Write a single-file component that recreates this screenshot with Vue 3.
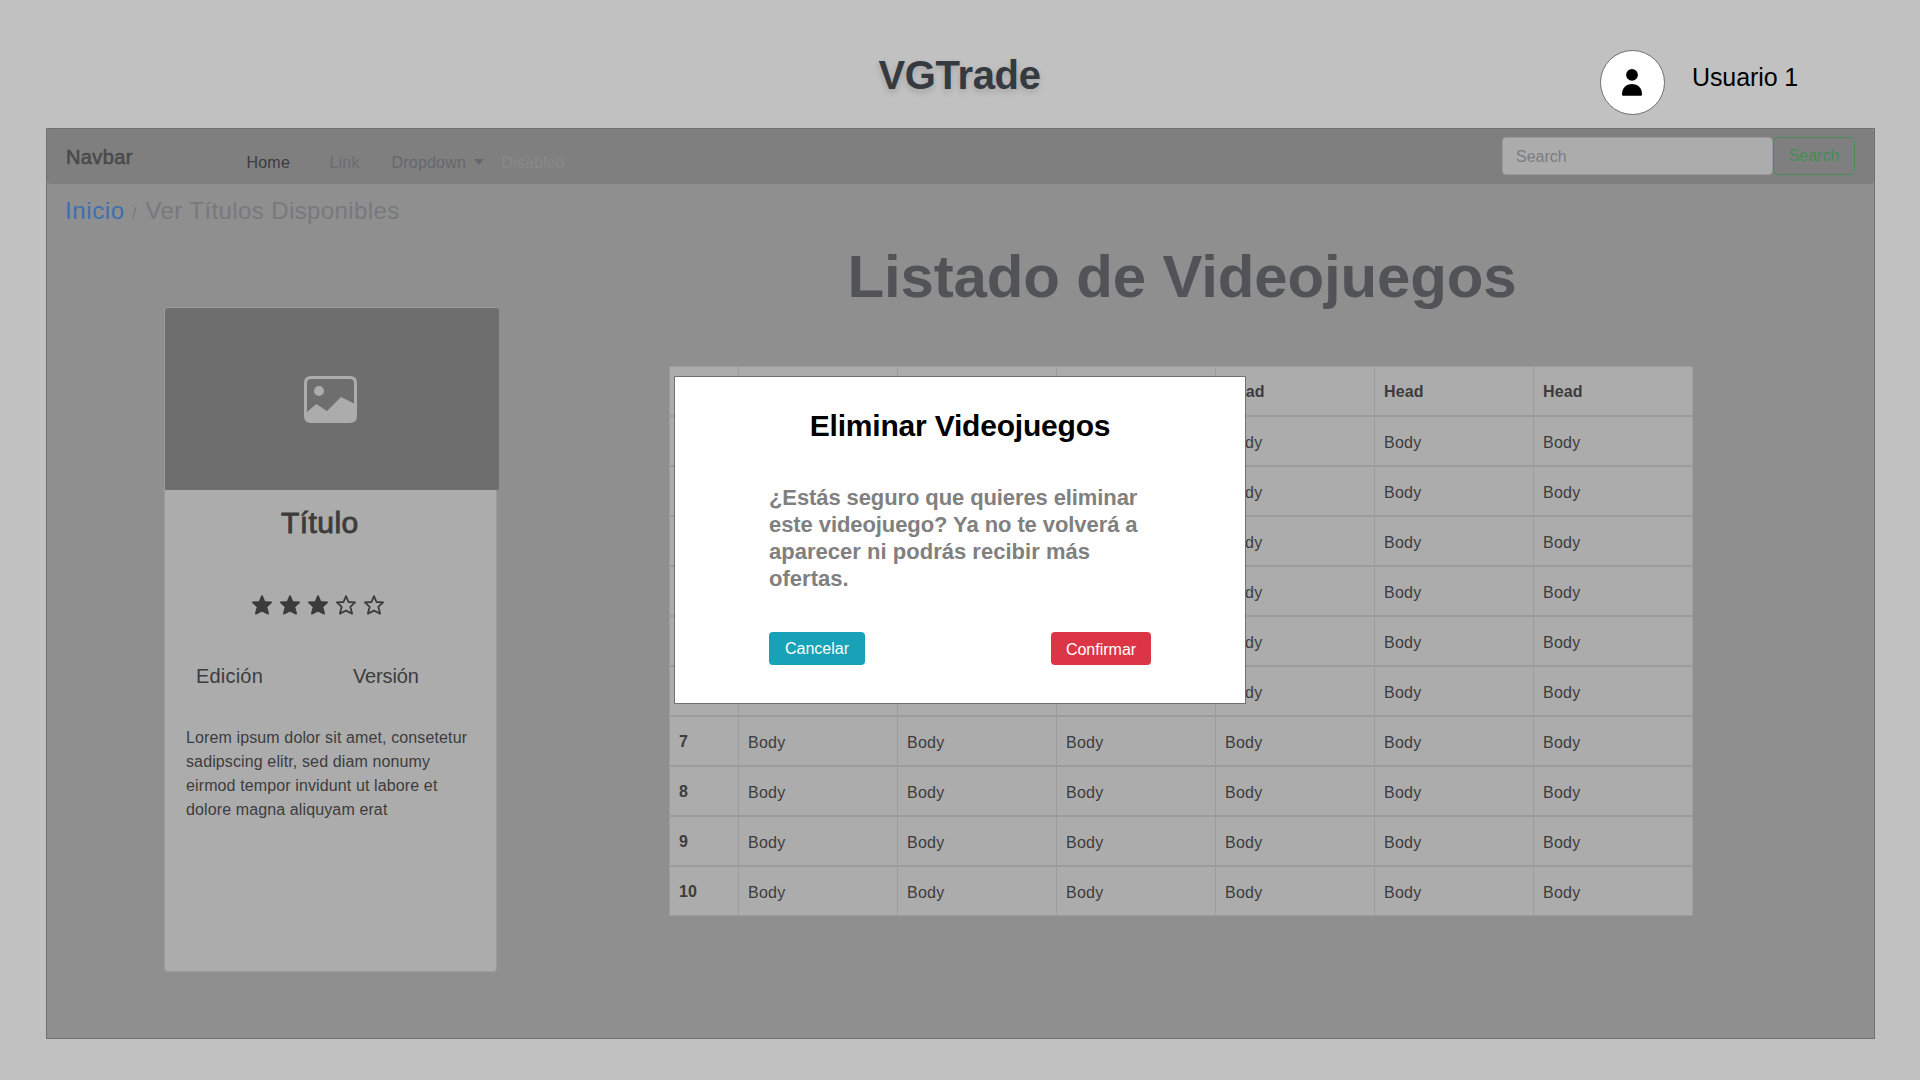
<script setup>
const columns = 6
const rows = Array.from({ length: 10 }, (_, i) => i + 1)
const stars = [true, true, true, false, false]
const starPath = 'M10 1.1 L12.5 7 L19.1 7.4 L14.3 11.8 L16.1 18.6 L10 15.6 L3.9 18.6 L5.7 11.8 L0.9 7.4 L7.5 7 Z'

// The dialog covers the first columns of the header and of rows 1 to 6.
const covered = (row, col) => row <= 6 && col <= 3
</script>

<template>
  <div class="page">
    <header class="top">
      <h1 class="brand">VGTrade</h1>
      <div class="avatar">
        <svg width="20" height="27" viewBox="0 0 20 27">
          <circle cx="10" cy="5.9" r="5.9" />
          <path d="M0 25.200C0 19 4.300 15 10 15S20 19 20 25.200Q20 26.800 18.700 26.800H1.300Q0 26.800 0 25.200Z" />
        </svg>
      </div>
      <span class="user">Usuario 1</span>
    </header>

    <div class="panel">
      <nav class="navbar">
        <span class="nav-brand">Navbar</span>
        <span class="home">Home</span>
        <span class="link">Link</span>
        <span class="dropdown">Dropdown</span>
        <i class="caret"></i>
        <span class="disabled">Disabled</span>
        <div class="search-input">Search</div>
        <div class="search-btn">Search</div>
      </nav>

      <div class="crumbs">
        <span class="start">Inicio</span><span class="slash">/</span><span class="current">Ver Títulos Disponibles</span>
      </div>

      <main class="main">
        <article class="card">
          <div class="cover">
            <svg width="53" height="47" viewBox="0 0 53 47">
              <path fill-rule="evenodd" d="M7 0H46Q53 0 53 7V40Q53 47 46 47H7Q0 47 0 40V7Q0 0 7 0ZM7 3Q3 3 3 7V36L12.300 28L23 35L37 21L50 27.500V7Q50 3 46 3Z" />
              <circle cx="15" cy="15" r="5" />
            </svg>
          </div>
          <h3 class="title">Título</h3>
          <div class="stars">
            <svg v-for="(full, i) in stars" :key="i" width="20" height="20" viewBox="0 0 20 20">
              <path :d="starPath" :class="full ? 'full' : 'empty'" />
            </svg>
          </div>
          <div class="meta"><span class="edition">Edición</span><span class="version">Versión</span></div>
          <p class="desc">
            Lorem ipsum dolor sit amet, consetetur<br />sadipscing elitr, sed diam nonumy<br />eirmod tempor invidunt ut labore et<br />dolore magna aliquyam erat
          </p>
        </article>

        <section class="listing">
          <h2 class="heading">Listado de Videojuegos</h2>
          <div class="table">
            <div class="row head">
              <div class="cell"></div>
              <div v-for="c in columns" :key="c" class="cell">{{ covered(0, c) ? '' : 'Head' }}</div>
            </div>
            <div v-for="r in rows" :key="r" class="row">
              <div class="cell num">{{ covered(r, 0) ? '' : r }}</div>
              <div v-for="c in columns" :key="c" class="cell">{{ covered(r, c) ? '' : 'Body' }}</div>
            </div>
          </div>
        </section>
      </main>
    </div>

    <div class="modal">
      <h2 class="modal-title">Eliminar Videojuegos</h2>
      <p class="modal-text">
        <span class="l1">¿Estás seguro que quieres eliminar</span>
        <span class="l2">este videojuego? Ya no te volverá a</span>
        <span class="l3">aparecer ni podrás recibir más</span>
        <span class="l3">ofertas.</span>
      </p>
      <div class="actions">
        <div class="btn cancel">Cancelar</div>
        <div class="btn confirm">Confirmar</div>
      </div>
    </div>
  </div>
</template>

<style>
body {
  margin: 0;
}
</style>

<style scoped>
* {
  box-sizing: border-box;
}
h1,
h2,
h3,
p {
  margin: 0;
}
.page {
  position: relative;
  width: 1920px;
  height: 1080px;
  overflow: hidden;
  background: #c1c1c1;
  font-family: 'Liberation Sans', Arial, sans-serif;
  font-size: 16px;
  color: #3c3c3c;
  white-space: nowrap;
}
.top {
  display: flex;
  align-items: flex-start;
  height: 128px;
}
.brand {
  margin: 55px 0 0 878.500px;
  width: 170px;
  font-size: 40px;
  line-height: 40px;
  letter-spacing: -0.35px;
  color: #343a40;
  text-shadow: 0 3px 6px rgba(0, 0, 0, 0.16);
}
.avatar {
  display: flex;
  justify-content: center;
  margin: 50px 0 0 551.500px;
  width: 65px;
  height: 65px;
  padding: 18px 1px 0 0;
  border: 1px solid #707070;
  border-radius: 50%;
  background: #fff;
}
.user {
  margin: 62px 0 0 27px;
  font-size: 25px;
  line-height: 30px;
  letter-spacing: -0.1px;
  color: #000;
}
.panel {
  margin: 0 45px 0 46px;
  height: 911px;
  border: 1px solid #707070;
  background: #8f8f8f;
}
.navbar {
  display: flex;
  align-items: flex-start;
  height: 55px;
  padding: 8px 19px 0;
  background: #7f7f7f;
  border-radius: 4px;
  line-height: 20px;
}
.nav-brand {
  width: 180.500px;
  margin-top: 10px;
  font-size: 20px;
  letter-spacing: 0.4px;
  color: #4a4a4a;
  -webkit-text-stroke: 0.6px #4a4a4a;
}
.home,
.link,
.dropdown,
.disabled {
  margin-top: 15.500px;
  letter-spacing: 0.2px;
}
.home {
  width: 83px;
  color: #3c3c3c;
}
.link {
  width: 62px;
  color: #6b6d71;
}
.dropdown {
  width: 82px;
  color: #66686c;
}
.caret {
  margin-top: 22px;
  border: 5.500px solid transparent;
  border-top: 6px solid #66686c;
  border-bottom: 0;
}
.disabled {
  margin-left: 18px;
  letter-spacing: 0.1px;
  color: #898989;
}
.search-input {
  width: 271px;
  height: 38px;
  margin-left: auto;
  padding: 9px 13px;
  border: 1px solid #98999b;
  border-radius: 4px;
  background: #acacac;
  color: #7b7d80;
}
.search-btn {
  width: 82px;
  height: 38px;
  padding-top: 8px;
  border: 1px solid #468c57;
  border-radius: 5px;
  text-align: center;
  color: #468c57;
}
.crumbs {
  display: flex;
  height: 45px;
  padding: 9px 0 0 18px;
  font-size: 24px;
  line-height: 36px;
  color: #77797d;
}
.start {
  width: 67px;
  letter-spacing: 0.6px;
  color: #3b70b0;
}
.slash {
  width: 13.500px;
  font-size: 16px;
  line-height: 41px;
}
.current {
  letter-spacing: 0.4px;
}
.main {
  display: flex;
  align-items: flex-start;
  padding-left: 117px;
}
.card {
  width: 333px;
  height: 665px;
  margin-top: 78px;
  border: 1px solid #9c9c9c;
  border-radius: 4px;
  background: #acacac;
}
.cover {
  display: flex;
  justify-content: center;
  width: 334px;
  height: 182px;
  padding: 68px 3px 0 0;
  border-radius: 3px 3px 0 0;
  background: #6e6e6e;
}
.cover svg {
  fill: #acacac;
}
.title {
  margin: 15px 0 0 116px;
  font-size: 30px;
  font-weight: 400;
  line-height: 36px;
  letter-spacing: 0.45px;
  -webkit-text-stroke: 0.9px #3c3c3c;
}
.stars {
  display: flex;
  gap: 8px;
  margin: 54px 0 0 87px;
}
.full,
.empty {
  stroke: #3c3c3c;
  stroke-width: 1.800;
  stroke-linejoin: round;
}
.full {
  fill: #3c3c3c;
}
.empty {
  fill: none;
}
.meta {
  display: flex;
  margin: 49px 0 0 31px;
  font-size: 20px;
  line-height: 24px;
}
.edition {
  width: 157px;
  letter-spacing: 0.2px;
}
.version {
  letter-spacing: -0.15px;
}
.desc {
  margin: 38px 0 0 21px;
  line-height: 24px;
  letter-spacing: 0.12px;
}
.listing {
  width: 1024px;
  margin: 12px 0 0 172px;
}
.heading {
  margin-left: 2px;
  font-size: 60px;
  line-height: 72px;
  letter-spacing: -0.15px;
  text-align: center;
  color: #525357;
}
.table {
  margin-top: 53px;
}
.row {
  display: grid;
  grid-template-columns: 69px repeat(5, 159px) 160px;
  height: 50px;
  border-top: 1px solid #9c9c9c;
  border-bottom: 1px solid #9c9c9c;
  background: #acacac;
}
.cell {
  padding: 15px 0 0 9px;
  border-left: 1px solid #9c9c9c;
  line-height: 21px;
  letter-spacing: 0.25px;
}
.cell:last-child {
  border-right: 1px solid #9c9c9c;
}
.head .cell,
.num {
  padding-top: 14px;
  font-weight: 700;
  letter-spacing: 0.15px;
}
.modal {
  position: absolute;
  left: 674px;
  top: 376px;
  width: 572px;
  height: 328px;
  border: 1px solid #707070;
  background: #fff;
}
.modal-title {
  margin-top: 31px;
  font-size: 30px;
  line-height: 36px;
  letter-spacing: -0.2px;
  text-align: center;
  color: #000;
}
.modal-text {
  margin: 40px 0 0 94px;
  font-size: 22px;
  font-weight: 700;
  line-height: 27px;
  color: #808080;
}
.modal-text span {
  display: block;
}
.l1 {
  letter-spacing: -0.1px;
}
.l2 {
  letter-spacing: -0.08px;
}
.l3 {
  letter-spacing: 0.02px;
}
.actions {
  display: flex;
  justify-content: space-between;
  margin: 40px 94px 0;
}
.btn {
  height: 33px;
  border-radius: 4px;
  text-align: center;
  color: #fff;
}
.cancel {
  width: 96px;
  line-height: 33px;
  background: #17a2b8;
}
.confirm {
  width: 100px;
  line-height: 35px;
  background: #dc3545;
}
</style>
